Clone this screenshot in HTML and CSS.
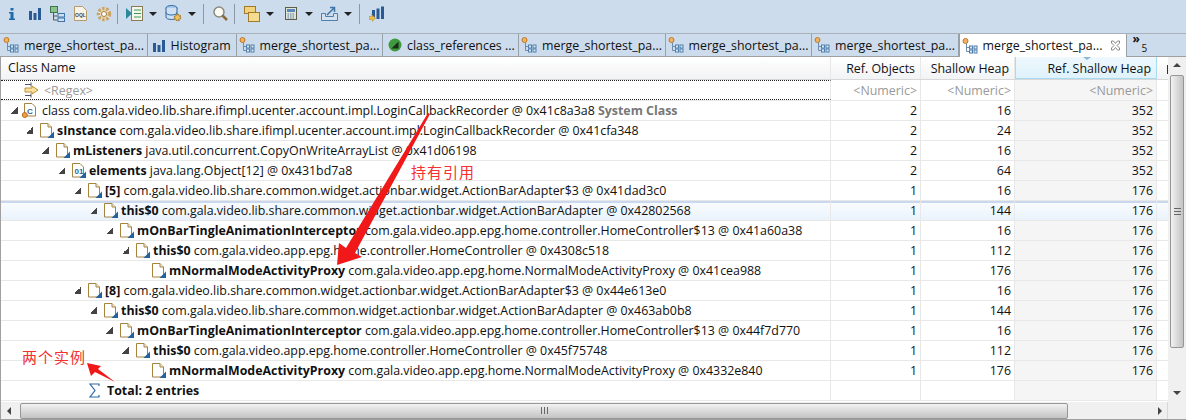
FILE: index.html
```html
<!DOCTYPE html>
<html lang="en">
<head>
    <meta charset="UTF-8">
    <title>Memory Analyzer</title>
    <link rel="stylesheet" href="styles.css">
</head>
<body>
    <svg class="defs" width="0" height="0">
        <symbol id="ico-tree" viewBox="0 0 16 16">
            <circle cx="3.500" cy="3" r="2.500" fill="#f2b266" stroke="#c07820"/>
            <path d="M4.500 5.500v8h3M4.500 9.500h3" fill="none" stroke="#6a8db0"/>
            <rect x="7.500" y="8" width="3" height="3" fill="#dfe9f3" stroke="#4f7fae"/>
            <rect x="12" y="8" width="3" height="3" fill="#dfe9f3" stroke="#4f7fae"/>
            <rect x="7.500" y="12" width="3" height="3" fill="#dfe9f3" stroke="#4f7fae"/>
            <rect x="12" y="12" width="3" height="3" fill="#dfe9f3" stroke="#4f7fae"/>
        </symbol>
        <symbol id="ico-bars" viewBox="0 0 12 13">
            <path d="M0 4h3v9H0zM4.500 6h3v7h-3zM9 1h3v12H9z" fill="#2a5a94"/>
        </symbol>
        <symbol id="ico-file" viewBox="0 0 14 15">
            <path d="M.5.5h7.500l3.500 3.500v10H.5z" fill="#fff" stroke="#a58340"/>
            <path d="M8 .5v3.500h3.500" fill="#f2efe4" stroke="#a58340"/>
            <path d="M7.500 15H14V8.500z" fill="#24609e"/>
        </symbol>
    </svg>

    <div class="toolbar">
        <span class="slot"><svg width="6" height="12" viewBox="0 0 6 12"><path d="M1.500 0h3v2.500h-3zM0 4h4.500v6.500H6V12H0v-1.500h1.500V5.500H0z" fill="#1f6aa8"/></svg></span>
        <span class="slot"><svg width="12" height="13"><use href="#ico-bars"/></svg></span>
        <span class="slot"><svg width="15" height="16" viewBox="0 0 15 16"><rect x=".5" y=".5" width="7" height="6" fill="#8cc08c" stroke="#3b7a4a"/><path d="M3.500 7v7h4M3.500 10h4" fill="none" stroke="#555"/><rect x="8" y="7.500" width="6.500" height="3.500" fill="#cfe0f2" stroke="#3f74a8"/><rect x="8" y="12" width="6.500" height="3.500" fill="#cfe0f2" stroke="#3f74a8"/></svg></span>
        <span class="slot"><svg width="13" height="15" viewBox="0 0 13 15"><path d="M.5.5h8l4 4v10H.5z" fill="#f7f3e8" stroke="#b89c68"/><text x="1" y="10.500" class="oql">OQL</text></svg></span>
        <span class="slot"><svg width="16" height="16" viewBox="0 0 16 16"><circle cx="8" cy="8" r="5.500" fill="#f2dfb8" stroke="#c8a468" stroke-width="3.500" stroke-dasharray="2.400 1.500"/><circle cx="8" cy="8" r="2.500" fill="#fff" stroke="#9c7a44"/></svg></span>
        <span class="sep"></span>
        <span class="slot"><svg width="17" height="15" viewBox="0 0 17 15"><path d="M0 2l6 5.500L0 13z" fill="#2b8a9a"/><rect x="5.500" y=".5" width="11" height="14" fill="#f4f7f0" stroke="#8a7a50"/><path d="M8 4h7M8 7.500h7M8 11h7" stroke="#3c9a50"/></svg></span>
        <span class="drop"></span>
        <span class="slot"><svg width="17" height="17" viewBox="0 0 17 17"><ellipse cx="6.500" cy="3" rx="5.500" ry="2.500" fill="#a8c8e8" stroke="#2a64a0"/><path d="M1 3v9c0 1.500 2.500 2.500 5.500 2.500S12 13.500 12 12V3M1 7.500c0 1.500 2.500 2.500 5.500 2.500S12 9 12 7.500" fill="#cfe0f2" stroke="#2a64a0"/><circle cx="12.500" cy="12.500" r="3" fill="#eec060" stroke="#9a7428" stroke-width="1.500" stroke-dasharray="1.500 .8"/></svg></span>
        <span class="drop"></span>
        <span class="sep"></span>
        <span class="slot"><svg width="15" height="15" viewBox="0 0 15 15"><circle cx="6" cy="6" r="5" fill="#fbfbf2" stroke="#8a8a80" stroke-width="1.500"/><path d="M9.500 9.500l4.500 4.500" stroke="#8a6a3a" stroke-width="2.500"/></svg></span>
        <span class="sep"></span>
        <span class="slot"><svg width="16" height="16" viewBox="0 0 16 16"><rect x=".5" y=".5" width="11" height="7" fill="#f2d27a" stroke="#a07a28"/><rect x="4.500" y="6.500" width="11" height="9" fill="#f6dc90" stroke="#a07a28"/></svg></span>
        <span class="drop"></span>
        <span class="slot"><svg width="12" height="13" viewBox="0 0 12 13"><rect x=".5" y=".5" width="11" height="12" fill="#dfe4d8" stroke="#5c5c48"/><rect x="2" y="2" width="8" height="3" fill="#5c8ab8"/><path d="M2.500 7h7M2.500 9h7M2.500 11h7" stroke="#5c7a9a" stroke-dasharray="1.500 1"/></svg></span>
        <span class="drop"></span>
        <span class="slot"><svg width="17" height="15" viewBox="0 0 17 15"><path d="M.5 7.500h4v3h8v-3h4v7H.5z" fill="#d4e2f0" stroke="#4f7fae"/><path d="M6 9l7-7M9 1.500h4.500V6" fill="none" stroke="#3f74a8" stroke-width="1.500"/></svg></span>
        <span class="drop"></span>
        <span class="sep"></span>
        <span class="slot"><svg width="16" height="16" viewBox="0 0 16 16"><path d="M3 4h3v9H3zM7.500 2.500h3V13h-3zM12 .5h3V13h-3z" fill="#2a5a94"/><path d="M0 10.500h3.500L2.500 8.500l4 3.500-3 3.500v-2H0z" fill="#eebf4a" stroke="#b58a24" stroke-width=".5"/></svg></span>
    </div>

    <div class="tabs">
        <div class="tab tab-a"><svg width="16" height="16"><use href="#ico-tree"/></svg><span>merge_shortest_pa...</span></div>
        <div class="tab tab-b"><svg width="12" height="13"><use href="#ico-bars"/></svg><span>Histogram</span></div>
        <div class="tab tab-a"><svg width="16" height="16"><use href="#ico-tree"/></svg><span>merge_shortest_pa...</span></div>
        <div class="tab tab-c"><svg width="14" height="14" viewBox="0 0 14 14"><circle cx="7" cy="7" r="6.500" fill="#3f9a3f"/><path d="M3.500 10.500L10.500 3.500v7z" fill="#1c2a1c"/></svg><span>class_references ...</span></div>
        <div class="tab tab-a"><svg width="16" height="16"><use href="#ico-tree"/></svg><span>merge_shortest_pa...</span></div>
        <div class="tab tab-a"><svg width="16" height="16"><use href="#ico-tree"/></svg><span>merge_shortest_pa...</span></div>
        <div class="tab tab-a"><svg width="16" height="16"><use href="#ico-tree"/></svg><span>merge_shortest_pa...</span></div>
        <div class="tab active"><svg width="16" height="16"><use href="#ico-tree"/></svg><span>merge_shortest_pa...</span><svg class="close" width="11" height="11" viewBox="0 0 11 11"><path d="M1.500 1h2L5.500 3.500 7.500 1h2v2L7 5.500 9.500 8v2h-2L5.500 7.500 3.500 10h-2V8L4 5.500 1.500 3z" fill="#fff" stroke="#8a8a8a"/></svg></div>
        <div class="more"><b>»</b><small>5</small></div>
    </div>

    <div class="view">
        <div class="main">
            <div class="row head">
                <div class="cell name">Class Name</div>
                <div class="cell num">Ref. Objects</div>
                <div class="cell num">Shallow Heap</div>
                <div class="cell num sorted">Ref. Shallow Heap<i class="sort-mark"></i></div>
                <div class="cell extra"><i class="stem"></i></div>
            </div>
            <div class="row filter">
                <div class="cell name"><svg class="regex" width="16" height="16" viewBox="0 0 16 16"><path d="M1 2.500h6M1 13.500h6M7 .5v4M7 11.500v4" stroke="#556" fill="none"/><path d="M1 6h7V4l6 4-6 4v-2H1z" fill="#f8e0a0" stroke="#c09030"/></svg><span>&lt;Regex&gt;</span></div>
                <div class="cell num">&lt;Numeric&gt;</div>
                <div class="cell num">&lt;Numeric&gt;</div>
                <div class="cell num sorted">&lt;Numeric&gt;</div>
                <div class="cell extra"></div>
            </div>

            <div class="row">
                <div class="cell name lv0"><i class="tw"></i><svg class="ic" width="14" height="15" viewBox="0 0 14 15"><path d="M2.500.5h7.500l3.500 3.500v9h-11z" fill="#fff" stroke="#a58340"/><text x="5" y="10.500" class="cls">C</text><circle cx="2.800" cy="12" r="2.500" fill="#f0a040" stroke="#b87020"/></svg><span>class com.gala.video.lib.share.ifimpl.ucenter.account.impl.LoginCallbackRecorder @ 0x41c8a3a8 <b class="sys">System Class</b></span></div>
                <div class="cell num">2</div><div class="cell num">16</div><div class="cell num sorted">352</div><div class="cell extra"></div>
            </div>
            <div class="row">
                <div class="cell name lv1"><i class="tw"></i><svg class="ic" width="14" height="15"><use href="#ico-file"/></svg><span><b>sInstance</b> com.gala.video.lib.share.ifimpl.ucenter.account.impl.LoginCallbackRecorder @ 0x41cfa348</span></div>
                <div class="cell num">2</div><div class="cell num">24</div><div class="cell num sorted">352</div><div class="cell extra"></div>
            </div>
            <div class="row">
                <div class="cell name lv2"><i class="tw"></i><svg class="ic" width="14" height="15"><use href="#ico-file"/></svg><span><b>mListeners</b> java.util.concurrent.CopyOnWriteArrayList @ 0x41d06198</span></div>
                <div class="cell num">2</div><div class="cell num">16</div><div class="cell num sorted">352</div><div class="cell extra"></div>
            </div>
            <div class="row">
                <div class="cell name lv3"><i class="tw"></i><svg class="ic" width="14" height="15" viewBox="0 0 14 15"><path d="M.5.5h7.500l3.500 3.500v10H.5z" fill="#fff" stroke="#a58340"/><text x="2.500" y="11" class="cls">01</text><path d="M7.500 15H14V8.500z" fill="#24609e"/></svg><span><b>elements</b> java.lang.Object[12] @ 0x431bd7a8</span></div>
                <div class="cell num">2</div><div class="cell num">64</div><div class="cell num sorted">352</div><div class="cell extra"></div>
            </div>
            <div class="row">
                <div class="cell name lv4"><i class="tw"></i><svg class="ic" width="14" height="15"><use href="#ico-file"/></svg><span><b>[5]</b> com.gala.video.lib.share.common.widget.actionbar.widget.ActionBarAdapter$3 @ 0x41dad3c0</span></div>
                <div class="cell num">1</div><div class="cell num">16</div><div class="cell num sorted">176</div><div class="cell extra"></div>
            </div>
            <div class="row picked">
                <div class="cell name lv5"><i class="tw"></i><svg class="ic" width="14" height="15"><use href="#ico-file"/></svg><span><b>this$0</b> com.gala.video.lib.share.common.widget.actionbar.widget.ActionBarAdapter @ 0x42802568</span></div>
                <div class="cell num">1</div><div class="cell num">144</div><div class="cell num sorted">176</div><div class="cell extra"></div>
            </div>
            <div class="row">
                <div class="cell name lv6"><i class="tw"></i><svg class="ic" width="14" height="15"><use href="#ico-file"/></svg><span><b>mOnBarTingleAnimationInterceptor</b> com.gala.video.app.epg.home.controller.HomeController$13 @ 0x41a60a38</span></div>
                <div class="cell num">1</div><div class="cell num">16</div><div class="cell num sorted">176</div><div class="cell extra"></div>
            </div>
            <div class="row">
                <div class="cell name lv7"><i class="tw"></i><svg class="ic" width="14" height="15"><use href="#ico-file"/></svg><span><b>this$0</b> com.gala.video.app.epg.home.controller.HomeController @ 0x4308c518</span></div>
                <div class="cell num">1</div><div class="cell num">112</div><div class="cell num sorted">176</div><div class="cell extra"></div>
            </div>
            <div class="row">
                <div class="cell name lv8"><i class="tw none"></i><svg class="ic" width="14" height="15"><use href="#ico-file"/></svg><span><b>mNormalModeActivityProxy</b> com.gala.video.app.epg.home.NormalModeActivityProxy @ 0x41cea988</span></div>
                <div class="cell num">1</div><div class="cell num">176</div><div class="cell num sorted">176</div><div class="cell extra"></div>
            </div>
            <div class="row">
                <div class="cell name lv4"><i class="tw"></i><svg class="ic" width="14" height="15"><use href="#ico-file"/></svg><span><b>[8]</b> com.gala.video.lib.share.common.widget.actionbar.widget.ActionBarAdapter$3 @ 0x44e613e0</span></div>
                <div class="cell num">1</div><div class="cell num">16</div><div class="cell num sorted">176</div><div class="cell extra"></div>
            </div>
            <div class="row">
                <div class="cell name lv5"><i class="tw"></i><svg class="ic" width="14" height="15"><use href="#ico-file"/></svg><span><b>this$0</b> com.gala.video.lib.share.common.widget.actionbar.widget.ActionBarAdapter @ 0x463ab0b8</span></div>
                <div class="cell num">1</div><div class="cell num">144</div><div class="cell num sorted">176</div><div class="cell extra"></div>
            </div>
            <div class="row">
                <div class="cell name lv6"><i class="tw"></i><svg class="ic" width="14" height="15"><use href="#ico-file"/></svg><span><b>mOnBarTingleAnimationInterceptor</b> com.gala.video.app.epg.home.controller.HomeController$13 @ 0x44f7d770</span></div>
                <div class="cell num">1</div><div class="cell num">16</div><div class="cell num sorted">176</div><div class="cell extra"></div>
            </div>
            <div class="row">
                <div class="cell name lv7"><i class="tw"></i><svg class="ic" width="14" height="15"><use href="#ico-file"/></svg><span><b>this$0</b> com.gala.video.app.epg.home.controller.HomeController @ 0x45f75748</span></div>
                <div class="cell num">1</div><div class="cell num">112</div><div class="cell num sorted">176</div><div class="cell extra"></div>
            </div>
            <div class="row">
                <div class="cell name lv8"><i class="tw none"></i><svg class="ic" width="14" height="15"><use href="#ico-file"/></svg><span><b>mNormalModeActivityProxy</b> com.gala.video.app.epg.home.NormalModeActivityProxy @ 0x4332e840</span></div>
                <div class="cell num">1</div><div class="cell num">176</div><div class="cell num sorted">176</div><div class="cell extra"></div>
            </div>
            <div class="row">
                <div class="cell name lv4"><i class="tw none"></i><svg class="ic sigma" width="14" height="15" viewBox="0 0 14 15"><path d="M11 3V1H2l5 6.500L2 14h9v-2" fill="none" stroke="#2f6aa6" stroke-width="1.200"/></svg><span><b>Total: 2 entries</b></span></div>
                <div class="cell num"></div><div class="cell num"></div><div class="cell num sorted"></div><div class="cell extra"></div>
            </div>

            <div class="hbar">
                <i class="arr-l"></i>
                <div class="thumb"><span class="grip"></span></div>
                <i class="arr-r"></i>
            </div>
        </div>
        <div class="vbar">
            <i class="arr-u"></i>
            <div class="vthumb"><span class="vgrip"></span></div>
            <i class="arr-d"></i>
        </div>

        <svg class="marks" width="1186" height="420" viewBox="0 0 1186 420">
            <path d="M428 113L346 248L339 243L337 265L362 257L355 253L430 114z" fill="#f01818"/>
            <path d="M87 363L101 366L98 369L115 382L95 372L91 376z" fill="#f01818"/>
        </svg>
        <div class="note note-ref">持有引用</div>
        <div class="note note-two">两个实例</div>
    </div>
</body>
</html>
```

FILE: styles.css
```css
html, body {
    margin: 0;
    padding: 0;
}
body {
    width: 1186px;
    height: 420px;
    overflow: hidden;
    background-color: #cddcec;
    font-family: "Open Sans", "Noto Sans CJK SC", sans-serif;
    font-size: 12.4px;
    color: #111;
    position: relative;
}
.defs {
    position: absolute;
}

/* toolbar */
.toolbar {
    height: 27px;
    margin-bottom: 6px;
    display: flex;
    align-items: center;
}
.slot {
    flex: none;
    width: 23px;
    display: flex;
    justify-content: center;
    align-items: center;
}
.sep {
    flex: none;
    width: 1px;
    height: 20px;
    background-color: #8b98a5;
    margin: 0 5px 0 2px;
}
.drop {
    flex: none;
    width: 0;
    height: 0;
    border-left: 4px solid transparent;
    border-right: 4px solid transparent;
    border-top: 4px solid #222;
    margin: 0 5px 0 3px;
}
.oql {
    font: bold 5px "Liberation Sans", sans-serif;
    fill: #445;
}

/* tabs */
.tabs {
    height: 22px;
    display: flex;
    align-items: stretch;
    border-top: 1px solid #a8b0b8;
    border-bottom: 1px solid #a0a0a0;
    padding-left: 1px;
}
.tab {
    display: flex;
    align-items: center;
    gap: 5px;
    padding-left: 2px;
    box-sizing: border-box;
    border-right: 1px solid #98a0a8;
    white-space: nowrap;
    overflow: hidden;
}
.tab svg {
    flex: none;
}
.tab-a {
    width: 146.500px;
}
.tab-b {
    width: 89px;
    padding-left: 5px;
    gap: 6px;
}
.tab-c {
    width: 136px;
    padding-left: 5px;
}
.tab.active {
    background-color: #fff;
    width: 168px;
    border-left: 1px solid #98a0a8;
    margin-bottom: -1px;
    position: relative;
}
.close {
    margin-left: 3px;
}
.more {
    position: relative;
    width: 40px;
    padding-left: 6px;
    box-sizing: border-box;
    line-height: 10px;
}
.more b {
    font-size: 12px;
}
.more small {
    font-size: 10px;
    position: absolute;
    left: 15px;
    top: 9px;
}

/* table */
.view {
    display: flex;
    height: 363px;
    box-sizing: border-box;
    background-color: #fff;
    border-left: 1px solid #a0a0a0;
    border-bottom: 1px solid #a0a0a0;
}
.main {
    width: 1167px;
    flex: none;
}
.row {
    display: flex;
    height: 20px;
    box-sizing: border-box;
    border-bottom: 1px solid #e8e8e8;
    line-height: 19px;
}
.cell {
    box-sizing: border-box;
    border-right: 1px solid #e8e8e8;
    white-space: nowrap;
    overflow: hidden;
}
.name {
    width: 830px;
    display: flex;
    align-items: center;
}
.num {
    width: 90px;
    text-align: right;
    padding-right: 3px;
}
.num:nth-child(3) {
    width: 94px;
}
.num.sorted {
    width: 142px;
    background-color: #f5f5f5;
}
.extra {
    width: 11px;
    border-right: 0;
}
.head {
    height: 23px;
    line-height: 24px;
    border-bottom: 1px solid #d8d8d8;
    background: linear-gradient(#fff, #f2f3f4);
}
.head .name {
    padding-left: 7px;
}
.head .num {
    padding-right: 5px;
}
.head .sorted {
    background: linear-gradient(#eef8fd, #dff2fb);
    border: 1px solid #a8daf2;
    border-top: 0;
    position: relative;
}
.head .extra {
    padding: 8px 0 0 10px;
}
.stem {
    display: block;
    width: 1px;
    height: 9px;
    background-color: #333;
}
.sort-mark {
    position: absolute;
    top: 0;
    right: 65px;
    border-left: 4px solid transparent;
    border-right: 4px solid transparent;
    border-top: 3px solid #8ab8d8;
}
.filter {
    height: 21px;
    line-height: 21px;
    color: #999;
}
.filter .name {
    border-top: 1px dotted #222;
    border-bottom: 1px dotted #222;
    height: 20px;
    padding-left: 23px;
    gap: 4px;
}
.picked {
    background: linear-gradient(#fafcfe, #e9f3fc);
    box-shadow: inset 0 2px #c9d8ee;
}
.picked .sorted {
    background: transparent;
}

/* tree indent */
.tw {
    flex: none;
    width: 7px;
    height: 7px;
    margin-right: 7px;
    background: linear-gradient(135deg, transparent 50%, #444 50%);
}
.tw.none {
    background: none;
}
.ic {
    flex: none;
    margin-right: 3px;
}
.sigma {
    margin-right: 5px;
}
.lv0 { padding-left: 10px; }
.lv0 .tw { margin-right: 4px; }
.lv0 .ic { margin-right: 6px; }
.lv1 { padding-left: 25px; }
.lv2 { padding-left: 41px; }
.lv3 { padding-left: 57px; }
.lv4 { padding-left: 73px; }
.lv5 { padding-left: 89px; }
.lv6 { padding-left: 105px; }
.lv7 { padding-left: 121px; }
.lv8 { padding-left: 137px; }
.cls {
    font: bold 8px "Liberation Sans", sans-serif;
    fill: #2a64a0;
}
.sys {
    color: #777;
}

/* scrollbars */
.hbar {
    height: 17px;
    margin-top: 1px;
    display: flex;
    align-items: center;
    background-color: #f0f0f0;
    border-right: 1px solid #d8d8d8;
    box-sizing: border-box;
}
.arr-l {
    margin-left: 6px;
    border-top: 4px solid transparent;
    border-bottom: 4px solid transparent;
    border-right: 4px solid #444;
}
.arr-r {
    margin-left: 90px;
    border-top: 4px solid transparent;
    border-bottom: 4px solid transparent;
    border-left: 4px solid #444;
}
.thumb {
    margin-left: 9px;
    width: 1048px;
    height: 16px;
    box-sizing: border-box;
    border: 1px solid #979797;
    border-radius: 2px;
    background: linear-gradient(#f2f2f2, #d8d8d8 55%, #c4c4c4);
    display: flex;
    justify-content: center;
    align-items: center;
}
.grip {
    width: 7px;
    height: 7px;
    background: repeating-linear-gradient(90deg, #666 0 1px, transparent 1px 3px);
}
.vbar {
    flex: 1;
    background-color: #f0f0f0;
    display: flex;
    flex-direction: column;
    align-items: center;
}
.arr-u {
    margin-top: 6px;
    border-left: 4px solid transparent;
    border-right: 4px solid transparent;
    border-bottom: 4px solid #444;
}
.vthumb {
    margin-top: 8px;
    width: 14px;
    height: 273px;
    box-sizing: border-box;
    border: 1px solid #979797;
    border-radius: 2px;
    background: linear-gradient(90deg, #f2f2f2, #d8d8d8 55%, #c4c4c4);
    display: flex;
    justify-content: center;
    align-items: center;
}
.vgrip {
    width: 7px;
    height: 7px;
    background: repeating-linear-gradient(#666 0 1px, transparent 1px 3px);
}
.arr-d {
    margin-top: 43px;
    border-left: 4px solid transparent;
    border-right: 4px solid transparent;
    border-top: 4px solid #444;
}

/* hand drawn annotations on top of the screenshot */
.marks {
    position: absolute;
    left: 0;
    top: 0;
    pointer-events: none;
}
.note {
    position: absolute;
    color: #f43030;
    font-family: "Noto Sans CJK SC", sans-serif;
    font-size: 15px;
    line-height: 20px;
    letter-spacing: 1px;
}
.note-ref {
    left: 411px;
    top: 162px;
}
.note-two {
    left: 22px;
    top: 347px;
}
```
